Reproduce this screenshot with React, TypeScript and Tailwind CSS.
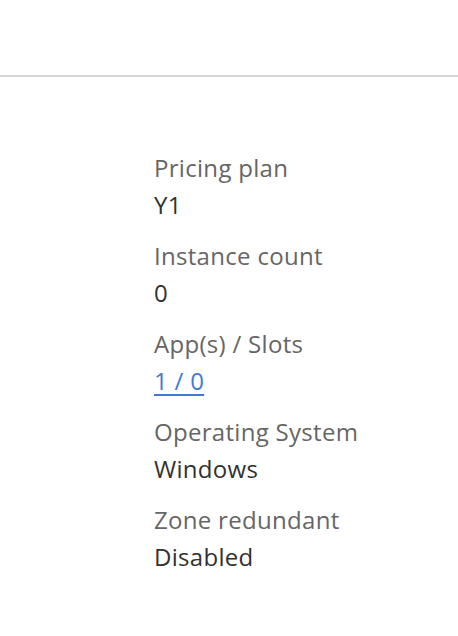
import React from "react";

const items: { label: string; value: string; link?: boolean }[] = [
  { label: "Pricing plan", value: "Y1" },
  { label: "Instance count", value: "0" },
  { label: "App(s) / Slots", value: "1 / 0", link: true },
  { label: "Operating System", value: "Windows" },
  { label: "Zone redundant", value: "Disabled" },
];

export default function App() {
  return (
    <div className="w-[458px] h-[636px] bg-white overflow-hidden" style={{ fontFamily: '"Open Sans", "Noto Sans", sans-serif' }}>
      <div className="h-[75px]" />
      <div className="h-[2px] bg-[#d6d6d6]" />
      <div className="pl-[154px] pt-[73px] flex flex-col gap-[14px]">
        {items.map((it) => (
          <div key={it.label} className="flex flex-col">
            <div className="text-[24px] leading-[36px] tracking-[0.3px] text-[#666666]">{it.label}</div>
            {it.link ? (
              <a className="text-[24px] leading-[38px] tracking-[0.3px] text-[#3f7bd1] underline decoration-2 underline-offset-[4px] self-start">{it.value}</a>
            ) : (
              <div className="text-[24px] leading-[38px] tracking-[0.3px] text-[#323130]">{it.value}</div>
            )}
          </div>
        ))}
      </div>
    </div>
  );
}
